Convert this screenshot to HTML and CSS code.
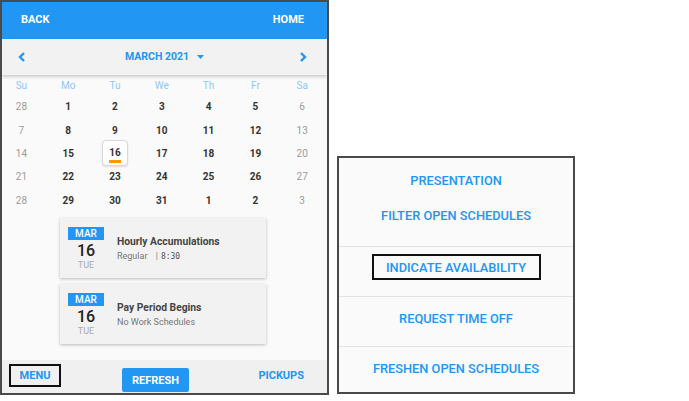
FILE: index.html
```html
<!DOCTYPE html>
<html>
<head>
<meta charset="utf-8">
<link rel="stylesheet" href="styles.css">
</head>
<body>
<div class="page">
  <div class="phone">
    <div class="topbar">
      <span>BACK</span>
      <span>HOME</span>
    </div>
    <div class="monthbar">
      <svg class="chev" width="8" height="10" viewBox="0 0 8 10"><polyline points="6,1 2,5 6,9" fill="none" stroke="#2196f3" stroke-width="2.4"/></svg>
      <div class="month">MARCH 2021 <svg class="caret" width="7" height="4" viewBox="0 0 7 4"><polygon points="0,0 7,0 3.5,4" fill="#2196f3"/></svg></div>
      <svg class="chev" width="8" height="10" viewBox="0 0 8 10"><polyline points="2,1 6,5 2,9" fill="none" stroke="#2196f3" stroke-width="2.4"/></svg>
    </div>
    <div class="cal">
      <div class="wd">Su</div><div class="wd">Mo</div><div class="wd">Tu</div><div class="wd">We</div><div class="wd">Th</div><div class="wd">Fr</div><div class="wd">Sa</div>
      <div class="d we">28</div><div class="d">1</div><div class="d">2</div><div class="d">3</div><div class="d">4</div><div class="d">5</div><div class="d we">6</div>
      <div class="d we">7</div><div class="d">8</div><div class="d">9</div><div class="d">10</div><div class="d">11</div><div class="d">12</div><div class="d we">13</div>
      <div class="d we">14</div><div class="d">15</div><div class="d"><span class="today">16</span></div><div class="d">17</div><div class="d">18</div><div class="d">19</div><div class="d we">20</div>
      <div class="d we">21</div><div class="d">22</div><div class="d">23</div><div class="d">24</div><div class="d">25</div><div class="d">26</div><div class="d we">27</div>
      <div class="d we">28</div><div class="d">29</div><div class="d">30</div><div class="d">31</div><div class="d">1</div><div class="d">2</div><div class="d we">3</div>
    </div>
    <div class="cards">
      <div class="card">
        <div class="badge"><div class="mon">MAR</div><div class="num">16</div><div class="dow">TUE</div></div>
        <div class="info">
          <div class="title">Hourly Accumulations</div>
          <div class="sub">Regular <span class="bar">|</span><span class="mono">8:30</span></div>
        </div>
      </div>
      <div class="card">
        <div class="badge"><div class="mon">MAR</div><div class="num">16</div><div class="dow">TUE</div></div>
        <div class="info">
          <div class="title">Pay Period Begins</div>
          <div class="sub">No Work Schedules</div>
        </div>
      </div>
    </div>
    <div class="bottombar">
      <span class="menu">MENU</span>
      <span class="refresh">REFRESH</span>
      <span class="pickups">PICKUPS</span>
    </div>
  </div>
  <div class="menupanel">
    <div class="group first">
      <div class="item">PRESENTATION</div>
      <div class="item">FILTER OPEN SCHEDULES</div>
    </div>
    <div class="group row boxrow"><span class="boxed">INDICATE AVAILABILITY</span></div>
    <div class="group row">REQUEST TIME OFF</div>
    <div class="group row last">FRESHEN OPEN SCHEDULES</div>
  </div>
</div>
</body>
</html>
```

FILE: styles.css
```css
* { box-sizing: border-box; }
html, body { margin: 0; padding: 0; background: #fff; }
body { font-family: Roboto, "Liberation Sans", sans-serif; }

.page { display: flex; align-items: flex-start; width: 689px; height: 401px; }

.phone {
  width: 329px;
  height: 395px;
  border: 2px solid #4a4a4a;
  background: #fafafa;
  display: flex;
  flex-direction: column;
  overflow: hidden;
}

.topbar {
  height: 37px;
  flex: none;
  background: #2196f3;
  color: #fff;
  font-weight: 700;
  font-size: 11px;
  display: flex;
  align-items: center;
  justify-content: space-between;
  padding: 0 23px 2px 19px;
}

.monthbar {
  height: 36px;
  flex: none;
  background: #f2f2f2;
  box-shadow: 0 2px 3px rgba(0,0,0,0.18);
  display: flex;
  align-items: center;
  justify-content: space-between;
  padding: 0 20px 1px 16px;
  position: relative;
}
.month {
  color: #2196f3;
  font-weight: 700;
  font-size: 10.5px;
  display: flex;
  align-items: center;
  gap: 8px;
  margin-left: 4px;
}
.chev { display: block; }
.caret { display: block; }

.cal {
  display: grid;
  grid-template-columns: repeat(7, 46.8px);
  grid-template-rows: 20px repeat(5, 23.4px);
  margin: 0 0 0 -4px;
  flex: none;
}
.wd {
  color: #90c6f6;
  font-size: 10px;
  display: flex;
  align-items: center;
  justify-content: center;
}
.d {
  color: #333;
  font-weight: 700;
  font-size: 10px;
  display: flex;
  align-items: center;
  justify-content: center;
}
.d.we { color: #9a9a9a; font-weight: 400; }
.today {
  width: 26px;
  height: 26px;
  border: 1px solid #d8d8d8;
  border-radius: 4px;
  background: #fff;
  box-shadow: 0 1px 2px rgba(0,0,0,0.12);
  display: flex;
  align-items: center;
  justify-content: center;
  position: relative;
  padding-bottom: 2px;
}
.today::after {
  content: "";
  position: absolute;
  left: 6px;
  bottom: 2px;
  width: 12px;
  height: 3px;
  background: #ff9800;
}

.cards {
  display: flex;
  flex-direction: column;
  gap: 6px;
  margin: 6px 0 0 58px;
  flex: none;
}
.card {
  width: 206px;
  height: 60px;
  background: #f2f2f2;
  box-shadow: 0 1px 3px rgba(0,0,0,0.25);
  display: flex;
  padding: 9px 0 0 8px;
}
.badge {
  width: 36px;
  display: flex;
  flex-direction: column;
  align-items: center;
}
.mon {
  width: 36px;
  height: 13px;
  background: #2196f3;
  color: #fff;
  font-size: 10px;
  font-weight: 500;
  line-height: 13px;
  text-align: center;
}
.num {
  font-size: 16px;
  font-weight: 500;
  color: #222;
  line-height: 18px;
  margin-top: 2px;
}
.dow {
  font-size: 9px;
  color: #aaa;
  line-height: 10px;
}
.info { margin-left: 13px; padding-top: 8px; }
.title { font-size: 10.3px; font-weight: 700; color: #444; line-height: 13px; }
.sub { font-size: 9px; color: #777; margin-top: 3px; line-height: 11px; }
.bar { margin-left: 6px; margin-right: 3px; }
.mono { font-family: "DejaVu Sans Mono", monospace; font-size: 8px; color: #555; }

.bottombar {
  margin-top: auto;
  height: 33px;
  flex: none;
  background: #f0f0f0;
  display: flex;
  align-items: flex-start;
  padding-top: 4px;
  font-size: 11px;
  font-weight: 700;
}
.menu {
  margin-left: 7px;
  width: 52px;
  height: 23px;
  border: 2px solid #111;
  color: #2196f3;
  display: flex;
  align-items: center;
  justify-content: center;
}
.refresh {
  margin-left: 61px;
  margin-top: 4px;
  width: 67px;
  height: 24px;
  background: #2196f3;
  color: #fff;
  display: flex;
  align-items: center;
  justify-content: center;
  border-radius: 2px;
}
.pickups {
  margin-left: auto;
  margin-right: 23px;
  color: #2196f3;
  height: 23px;
  display: flex;
  align-items: center;
}

.menupanel {
  margin-left: 8px;
  margin-top: 156px;
  width: 238px;
  height: 238px;
  border: 2px solid #4a4a4a;
  background: #fafafa;
  color: #2196f3;
  font-size: 12.8px;
  font-weight: 500;
  display: flex;
  flex-direction: column;
}
.group.first { height: 88px; padding-top: 5px; }
.item { height: 35px; display: flex; align-items: center; justify-content: center; }
.group.row {
  height: 50px;
  border-top: 1px solid #e2e2e2;
  display: flex;
  align-items: center;
  justify-content: center;
  padding-bottom: 6px;
}
.group.row.boxrow { padding-bottom: 9px; }
.group.row.last { height: auto; flex: 1; padding-bottom: 2px; }
.boxed {
  width: 169px;
  height: 26px;
  border: 2px solid #111;
  display: flex;
  align-items: center;
  justify-content: center;
}
```
